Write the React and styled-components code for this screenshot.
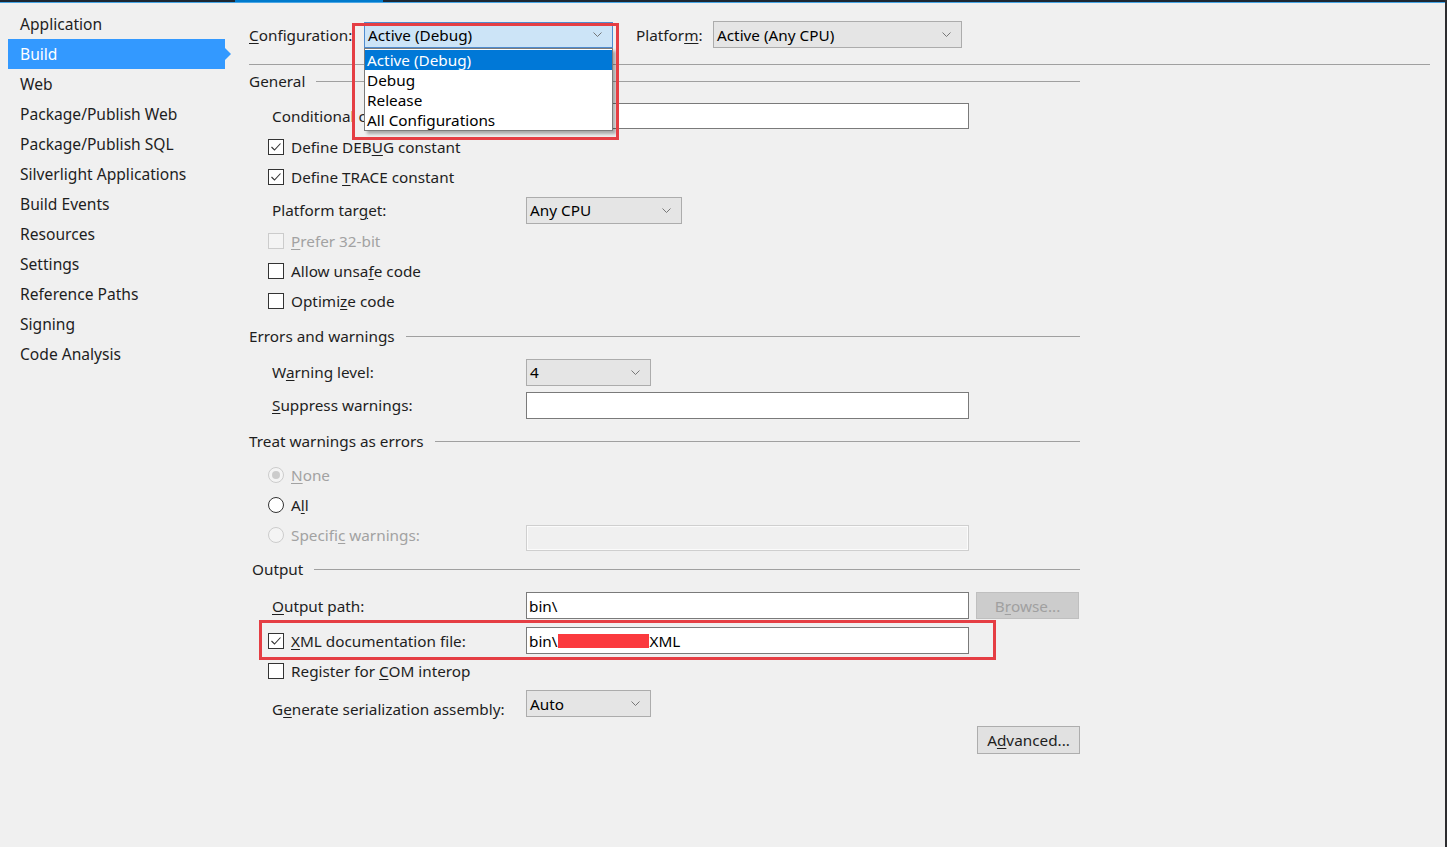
import React from 'react';
import styled, { createGlobalStyle } from 'styled-components';

const Global = createGlobalStyle`
  html, body { margin: 0; padding: 0; background: #f0f0f0; }
  body {
    font-family: "Noto Sans", "Open Sans", sans-serif;
    font-size: 15.3px;
    color: #1e1e1e;
  }
  * { box-sizing: border-box; }
  u { text-underline-offset: 2px; text-decoration-thickness: 1px; }
`;

const Frame = styled.div`
  width: 1447px;
  height: 847px;
  display: flex;
  flex-direction: column;
  background: #f0f0f0;
  border-right: 2px solid #2d2d30;
  overflow: hidden;
`;

const TopStripe = styled.div`
  flex-shrink: 0;
  height: 2px;
  display: flex;
  background: #1d2733;
`;

const ActiveSegment = styled.div`
  margin-left: 235px;
  width: 148px;
  background: #007acc;
`;

const TopGlow = styled.div`
  flex-shrink: 0;
  height: 1px;
  background: #48a6e6;
`;

const Body = styled.div`
  flex: 1;
  display: flex;
`;

const Sidebar = styled.nav`
  width: 232px;
  flex-shrink: 0;
  padding: 6px 0 0 8px;
  display: flex;
  flex-direction: column;
`;

const NavItem = styled.div`
  position: relative;
  width: 217px;
  height: 30px;
  display: flex;
  align-items: center;
  padding-left: 12px;
  font-size: 15.6px;
  color: ${p => (p.$selected ? '#ffffff' : '#1e1e1e')};
  background: ${p => (p.$selected ? '#3399ff' : 'transparent')};
  &::after {
    content: '';
    display: ${p => (p.$selected ? 'block' : 'none')};
    position: absolute;
    right: -6px;
    top: 9px;
    border-left: 6px solid #3399ff;
    border-top: 6px solid transparent;
    border-bottom: 6px solid transparent;
  }
`;

const Main = styled.main`
  flex: 1;
  padding: 18px 0 0 17px;
  display: flex;
  flex-direction: column;
`;

const HeaderRow = styled.div`
  height: 27px;
  display: flex;
  align-items: center;
`;

const HeaderLabel = styled.span`
  width: ${p => p.$width}px;
  flex-shrink: 0;
  white-space: nowrap;
`;

const ComboAnchor = styled.div`
  position: relative;
  margin-right: ${p => p.$gap || 0}px;
`;

const Combo = styled.div`
  width: ${p => p.$width}px;
  height: ${p => p.$height || 27}px;
  display: flex;
  align-items: center;
  justify-content: space-between;
  padding: 0 10px 0 3px;
  background: ${p => (p.$active ? '#cce4f7' : '#e5e5e5')};
  border: 1px solid ${p => (p.$active ? '#4f8ccf' : '#acacac')};
  color: #000;
  white-space: nowrap;
`;

const DropList = styled.div`
  position: absolute;
  z-index: 3;
  top: 100%;
  left: 0;
  width: 249px;
  padding-top: 1px;
  background: #ffffff;
  border: 1px solid #7c7c7c;
  box-shadow: 3px 3px 3px rgba(0, 0, 0, 0.3);
  display: flex;
  flex-direction: column;
`;

const DropItem = styled.div`
  height: 20px;
  line-height: 20px;
  padding-left: 2px;
  color: ${p => (p.$selected ? '#ffffff' : '#000000')};
  background: ${p => (p.$selected ? '#0078d7' : 'transparent')};
  white-space: nowrap;
`;

const RedBox = styled.div`
  position: absolute;
  z-index: 4;
  pointer-events: none;
  left: ${p => p.$left}px;
  top: ${p => p.$top}px;
  width: ${p => p.$width}px;
  height: ${p => p.$height}px;
  border: 3px solid #e53e44;
`;

const Divider = styled.div`
  height: 1px;
  margin: 16px 15px 0 0;
  background: #a0a0a0;
`;

const Section = styled.section`
  width: 831px;
  display: flex;
  flex-direction: column;
`;

const SectionHeader = styled.div`
  height: ${p => p.$h}px;
  display: flex;
  align-items: center;
  gap: 11px;
  padding-left: ${p => p.$indent || 0}px;
  &::after {
    content: '';
    flex: 1;
    height: 1px;
    background: #a0a0a0;
  }
`;

const Row = styled.div`
  position: relative;
  height: ${p => p.$h}px;
  display: flex;
  align-items: ${p => p.$align || 'center'};
  justify-content: ${p => p.$justify || 'flex-start'};
  padding-left: 19px;
`;

const FieldLabel = styled.span`
  width: 254px;
  margin-left: 4px;
  flex-shrink: 0;
  white-space: nowrap;
  padding-top: ${p => p.$drop || 0}px;
  color: ${p => (p.$disabled ? '#a2a2a2' : '#1e1e1e')};
`;

const CheckLabel = styled.label`
  display: flex;
  align-items: center;
  gap: 7px;
  flex-shrink: 0;
  width: ${p => (p.$width ? `${p.$width}px` : 'auto')};
  margin-top: ${p => p.$shift || 0}px;
  white-space: nowrap;
  color: ${p => (p.$disabled ? '#a2a2a2' : '#1e1e1e')};
`;

const TextBox = styled.div`
  width: 443px;
  height: ${p => p.$height || 27}px;
  display: flex;
  align-items: center;
  padding-left: 2px;
  background: ${p => (p.$disabled ? '#f0f0f0' : '#ffffff')};
  border: 1px solid ${p => (p.$disabled ? '#cfcfcf' : '#7a7a7a')};
  box-shadow: ${p => (p.$disabled ? 'inset 0 0 0 1px #fbfbfb' : 'none')};
  color: #000;
  white-space: nowrap;
`;

const Redacted = styled.span`
  display: inline-block;
  width: 91px;
  height: 14px;
  background: #fb3a3e;
  margin-right: 1px;
`;

const Button = styled.div`
  width: 103px;
  height: ${p => p.$height || 27}px;
  display: flex;
  align-items: center;
  justify-content: center;
  background: ${p => (p.$disabled ? '#cccccc' : '#e1e1e1')};
  border: 1px solid ${p => (p.$disabled ? '#bfbfbf' : '#adadad')};
  color: ${p => (p.$disabled ? '#a0a0a0' : '#1e1e1e')};
  margin-left: ${p => p.$gap || 0}px;
`;

const Chevron = () => (
  <svg width="9" height="5" viewBox="0 0 9 5" fill="none">
    <path d="M0.5 0.5 L4.5 4.5 L8.5 0.5" stroke="#6a6a6a" strokeWidth="0.9" />
  </svg>
);

const CheckBox = ({ checked, disabled }) => (
  <svg width="16" height="16" viewBox="0 0 16 16">
    <rect
      x="0.5"
      y="0.5"
      width="15"
      height="15"
      fill={disabled ? '#f4f4f4' : '#ffffff'}
      stroke={disabled ? '#cccccc' : '#333333'}
    />
    {checked && (
      <path d="M3.5 8 L6.5 11 L12.5 4.5" fill="none" stroke="#333333" strokeWidth="1.1" />
    )}
  </svg>
);

const Radio = ({ checked, disabled }) => (
  <svg width="16" height="16" viewBox="0 0 16 16">
    <circle
      cx="8"
      cy="8"
      r="7.5"
      fill={disabled ? '#f4f4f4' : '#ffffff'}
      stroke={disabled ? '#cccccc' : '#333333'}
    />
    {checked && <circle cx="8" cy="8" r="4" fill={disabled ? '#cccccc' : '#333333'} />}
  </svg>
);

const navItems = [
  'Application',
  'Build',
  'Web',
  'Package/Publish Web',
  'Package/Publish SQL',
  'Silverlight Applications',
  'Build Events',
  'Resources',
  'Settings',
  'Reference Paths',
  'Signing',
  'Code Analysis',
];

const configOptions = ['Active (Debug)', 'Debug', 'Release', 'All Configurations'];

export default function App() {
  return (
    <>
      <Global />
      <Frame>
        <TopStripe>
          <ActiveSegment />
        </TopStripe>
        <TopGlow />
        <Body>
          <Sidebar>
            {navItems.map(item => (
              <NavItem key={item} $selected={item === 'Build'}>
                {item}
              </NavItem>
            ))}
          </Sidebar>

          <Main>
            <HeaderRow>
              <HeaderLabel $width={115}>
                <u>C</u>onfiguration:
              </HeaderLabel>
              <ComboAnchor $gap={23}>
                <Combo $width={249} $height={26} $active>
                  <span>Active (Debug)</span>
                  <Chevron />
                </Combo>
                <DropList>
                  {configOptions.map((o, i) => (
                    <DropItem key={o} $selected={i === 0}>
                      {o}
                    </DropItem>
                  ))}
                </DropList>
                <RedBox $left={-12} $top={1} $width={267} $height={117} />
              </ComboAnchor>
              <HeaderLabel $width={77}>
                Platfor<u>m</u>:
              </HeaderLabel>
              <Combo $width={249}>
                <span>Active (Any CPU)</span>
                <Chevron />
              </Combo>
            </HeaderRow>

            <Divider />

            <Section>
              <SectionHeader $h={32}>General</SectionHeader>
              <Row $h={37}>
                <FieldLabel>Conditional compilation symbols:</FieldLabel>
                <TextBox $height={26} />
              </Row>
              <Row $h={26}>
                <CheckLabel>
                  <CheckBox checked />
                  <span>
                    Define DEB<u>U</u>G constant
                  </span>
                </CheckLabel>
              </Row>
              <Row $h={34}>
                <CheckLabel>
                  <CheckBox checked />
                  <span>
                    Define <u>T</u>RACE constant
                  </span>
                </CheckLabel>
              </Row>
              <Row $h={32}>
                <FieldLabel>
                  Platform tar<u>g</u>et:
                </FieldLabel>
                <Combo $width={156}>
                  <span>Any CPU</span>
                  <Chevron />
                </Combo>
              </Row>
              <Row $h={30}>
                <CheckLabel $disabled>
                  <CheckBox disabled />
                  <span>
                    <u>P</u>refer 32-bit
                  </span>
                </CheckLabel>
              </Row>
              <Row $h={30}>
                <CheckLabel>
                  <CheckBox />
                  <span>
                    Allow unsa<u>f</u>e code
                  </span>
                </CheckLabel>
              </Row>
              <Row $h={30}>
                <CheckLabel>
                  <CheckBox />
                  <span>
                    Optimi<u>z</u>e code
                  </span>
                </CheckLabel>
              </Row>

              <SectionHeader $h={40}>Errors and warnings</SectionHeader>
              <Row $h={32}>
                <FieldLabel>
                  W<u>a</u>rning level:
                </FieldLabel>
                <Combo $width={125}>
                  <span>4</span>
                  <Chevron />
                </Combo>
              </Row>
              <Row $h={34}>
                <FieldLabel>
                  <u>S</u>uppress warnings:
                </FieldLabel>
                <TextBox />
              </Row>

              <SectionHeader $h={38}>Treat warnings as errors</SectionHeader>
              <Row $h={30}>
                <CheckLabel $disabled>
                  <Radio checked disabled />
                  <span>
                    <u>N</u>one
                  </span>
                </CheckLabel>
              </Row>
              <Row $h={30}>
                <CheckLabel>
                  <Radio />
                  <span>
                    A<u>l</u>l
                  </span>
                </CheckLabel>
              </Row>
              <Row $h={36}>
                <CheckLabel $disabled $width={258} $shift={-6}>
                  <Radio disabled />
                  <span>
                    Specifi<u>c</u> warnings:
                  </span>
                </CheckLabel>
                <TextBox $disabled $height={26} />
              </Row>

              <SectionHeader $h={26} $indent={3}>Output</SectionHeader>
              <Row $h={47}>
                <FieldLabel>
                  <u>O</u>utput path:
                </FieldLabel>
                <TextBox>bin\</TextBox>
                <Button $disabled $gap={7}>
                  B<u>r</u>owse...
                </Button>
              </Row>
              <Row $h={23}>
                <CheckLabel $width={258}>
                  <CheckBox checked />
                  <span>
                    <u>X</u>ML documentation file:
                  </span>
                </CheckLabel>
                <TextBox>
                  bin\
                  <Redacted />
                  XML
                </TextBox>
                <RedBox $left={10} $top={-9} $width={737} $height={40} />
              </Row>
              <Row $h={38}>
                <CheckLabel>
                  <CheckBox />
                  <span>
                    Register for <u>C</u>OM interop
                  </span>
                </CheckLabel>
              </Row>
              <Row $h={27}>
                <FieldLabel $drop={10}>
                  G<u>e</u>nerate serialization assembly:
                </FieldLabel>
                <Combo $width={125}>
                  <span>Auto</span>
                  <Chevron />
                </Combo>
              </Row>
              <Row $h={37} $align="flex-end" $justify="flex-end">
                <Button $height={28}>
                  A<u>d</u>vanced...
                </Button>
              </Row>
            </Section>
          </Main>
        </Body>
      </Frame>
    </>
  );
}
